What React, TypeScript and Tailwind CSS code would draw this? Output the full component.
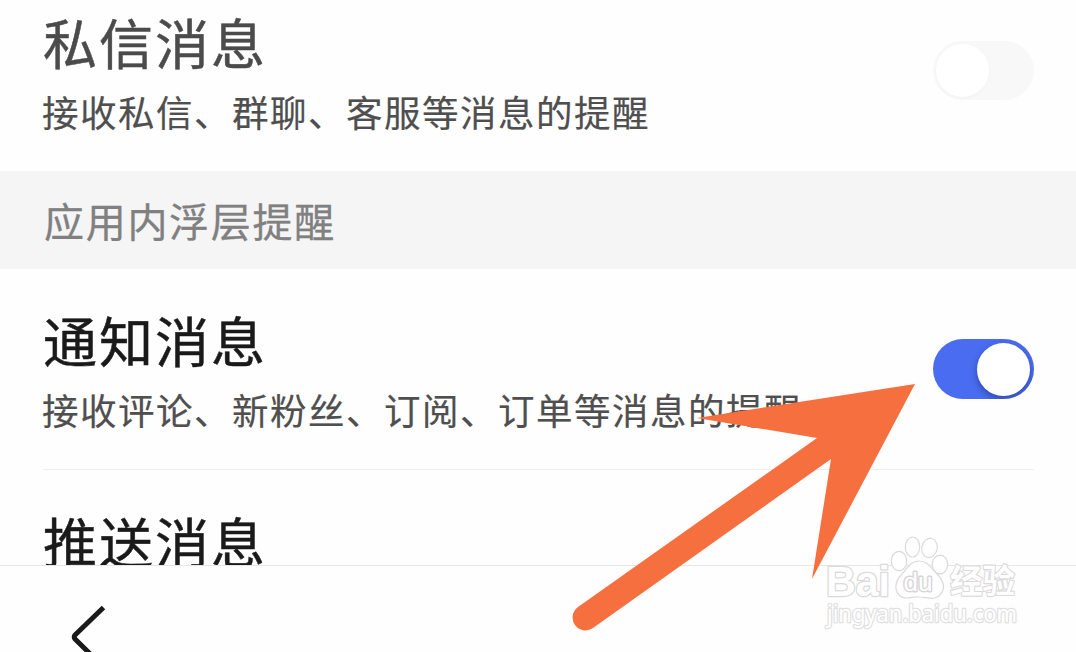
import React from "react";

function Toggle({ on }: { on: boolean }) {
  return (
    <div
      role="switch"
      aria-checked={on}
      className={
        on
          ? "flex h-[60px] w-[101px] shrink-0 items-center justify-end overflow-hidden rounded-full bg-[#4a6cf0] px-[4px]"
          : "flex h-[59px] w-[101px] shrink-0 items-center overflow-hidden rounded-full bg-[#f8f8f8] px-[3px]"
      }
    >
      <div
        className={
          on
            ? "size-[53px] rounded-full bg-white shadow-[0_3px_7px_rgba(20,30,90,0.45)]"
            : "size-[53px] rounded-full bg-white shadow-[0_1px_3px_rgba(0,0,0,0.03)]"
        }
      />
    </div>
  );
}

function Title({ children, muted = false }: { children: string; muted?: boolean }) {
  return (
    <h2
      className={
        muted
          ? "whitespace-nowrap text-[54px] leading-[56px] font-normal tracking-[2px] text-[#4b4b4b] [-webkit-text-stroke:0.5px_#4b4b4b]"
          : "whitespace-nowrap text-[54px] leading-[56px] font-normal tracking-[2px] text-[#1a1a1a] [-webkit-text-stroke:0.5px_#1a1a1a]"
      }
    >
      {children}
    </h2>
  );
}

function Description({ children }: { children: string }) {
  return (
    <p className="mt-[23px] -ml-px whitespace-nowrap text-[36.500px] leading-[38px] tracking-[1.500px] text-[#4f4f4f] [-webkit-text-stroke:0.2px_#4f4f4f]">
      {children}
    </p>
  );
}

function Arrow() {
  return (
    <svg className="pointer-events-none absolute inset-0" width="1076" height="652" viewBox="0 0 1076 652">
      <path
        d="M915 384L812 579L831 459L593 628A12.8 12.8 0 0 1 578 607L817 438L697 418Z"
        fill="#f66f3f"
      />
    </svg>
  );
}

function Watermark() {
  return (
    <svg
      className="pointer-events-none absolute top-[525px] left-[810px]"
      width="230"
      height="115"
      viewBox="0 0 230 115"
      fill="#fff"
      stroke="#dadada"
      strokeWidth="1.2"
      strokeLinejoin="round"
    >
      <text x="16" y="70.500" fontSize="43" fontFamily="'Liberation Sans', sans-serif" fontWeight="700" textLength="64" lengthAdjust="spacingAndGlyphs" strokeWidth="2.6" paintOrder="stroke">
        Bai
      </text>
      <ellipse cx="89" cy="36" rx="7.7" ry="9.7" />
      <ellipse cx="102.5" cy="22" rx="7.2" ry="10" />
      <ellipse cx="119.500" cy="23" rx="7.700" ry="9.700" transform="rotate(12 119.5 23)" />
      <ellipse cx="130" cy="39.500" rx="7.700" ry="9.300" />
      <path d="M109 36C100 36 97 44 92 49C85 56 84 64 89 70C95 76 102 71 109 72C117 72 124 76 130 70C136 63 134 56 127 49C121 43 118 36 109 36Z" />
      <text x="93.500" y="65.500" fontSize="25" fontFamily="'Liberation Sans', sans-serif" fontWeight="400" textLength="29" lengthAdjust="spacingAndGlyphs" stroke="#d6d6d6" strokeWidth="2.8" paintOrder="stroke">
        du
      </text>
      <text x="140" y="68" fontSize="32.500" fontFamily="'Noto Sans CJK SC', sans-serif" fontWeight="700" strokeWidth="2.2" paintOrder="stroke">
        经验
      </text>
      <text x="17" y="96.500" fontSize="23" fontFamily="'Noto Sans', sans-serif" fontWeight="400" textLength="190" lengthAdjust="spacingAndGlyphs" stroke="#e1e1e1" strokeWidth="2.6" paintOrder="stroke">
        jingyan.baidu.com
      </text>
    </svg>
  );
}

export default function App() {
  return (
    <main className="relative flex h-[652px] w-[1076px] flex-col overflow-hidden bg-[#fefefe] font-['Noto_Sans_CJK_SC',sans-serif]">
      <section className="flex h-[171px] shrink-0 items-start justify-between pr-[42px] pl-[43px]">
        <div className="pt-[14px]">
          <Title muted>私信消息</Title>
          <Description>接收私信、群聊、客服等消息的提醒</Description>
        </div>
        <div className="pt-[41px]">
          <Toggle on={false} />
        </div>
      </section>

      <div className="flex h-[98px] shrink-0 items-center bg-[#f5f5f5] pl-[44px]">
        <h3 className="text-[40px] leading-[42px] tracking-[1.700px] text-[#808080] [-webkit-text-stroke:0.3px_#808080]">
          应用内浮层提醒
        </h3>
      </div>

      <section className="mr-[42px] ml-[43px] flex h-[201px] shrink-0 items-start justify-between border-b border-[#eeeeee]">
        <div className="pt-[43px]">
          <Title>通知消息</Title>
          <Description>接收评论、新粉丝、订阅、订单等消息的提醒</Description>
        </div>
        <div className="pt-[70px]">
          <Toggle on />
        </div>
      </section>

      <section className="h-[95px] shrink-0 overflow-hidden pt-[43px] pl-[43px]">
        <Title>推送消息</Title>
      </section>

      <footer className="flex flex-1 items-start overflow-hidden border-t border-[#e6e6e6] pt-[36px] pl-[66px]">
        <svg
          className="shrink-0"
          width="44"
          height="68"
          viewBox="0 0 44 68"
          fill="none"
          stroke="#1a1a1a"
          strokeWidth="5"
          strokeLinejoin="round"
        >
          <path d="M37.500 5.500L9 33Q7.500 35 9 37L37.500 65" />
        </svg>
      </footer>

      <Arrow />
      <Watermark />
    </main>
  );
}
